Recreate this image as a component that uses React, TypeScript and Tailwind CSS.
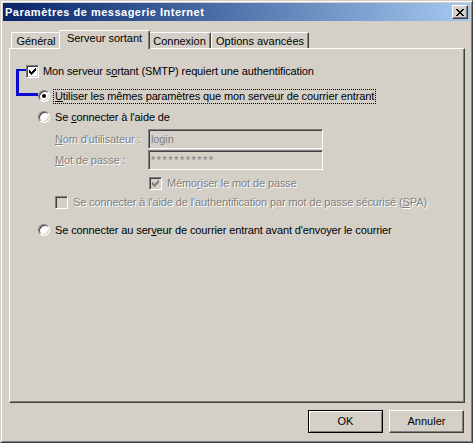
import type { ReactNode } from 'react';

const CHECK = 'M6 0h1v1h-1z M5 1h2v1h-2z M0 2h1v1h-1z M4 2h3v1h-3z M0 3h2v1h-2z M3 3h3v1h-3z M0 4h5v1h-5z M1 5h3v1h-3z M2 6h1v1h-1z';
const CROSS = 'M0 0h2v1h-2z M6 0h2v1h-2z M1 1h2v1h-2z M5 1h2v1h-2z M2 2h4v1h-4z M3 3h2v1h-2z M2 4h4v1h-4z M1 5h2v1h-2z M5 5h2v1h-2z M0 6h2v1h-2z M6 6h2v1h-2z';

const Check = ({ checked, disabled }: { checked?: boolean; disabled?: boolean }) => (
    <span
        className={`flex h-[13px] w-[13px] shrink-0 items-center justify-center border border-t-[#808080] border-l-[#808080] border-r-white border-b-white shadow-[inset_1px_1px_0_#404040,inset_-1px_-1px_0_#d4d0c8] ${disabled ? 'bg-[#d4d0c8]' : 'bg-white'}`}
    >
        {checked && (
            <svg width="7" height="7" viewBox="0 0 7 7" shapeRendering="crispEdges" className={disabled ? 'fill-[#808080]' : 'fill-black'}>
                <path d={CHECK} />
            </svg>
        )}
    </span>
);

const Radio = ({ checked }: { checked?: boolean }) => (
    <span className="flex h-[12px] w-[12px] shrink-0 items-center justify-center rounded-full border border-t-[#808080] border-l-[#808080] border-r-white border-b-white bg-white shadow-[inset_1px_1px_0_#404040,inset_-1px_-1px_0_#d4d0c8]">
        {checked && <span className="h-[4px] w-[4px] rounded-full bg-black" />}
    </span>
);

const Tab = ({ label, width, active }: { label: string; width: string; active?: boolean }) => (
    <div
        className={
            active
                ? `relative z-10 -mx-[2px] -mb-[1px] flex h-[19px] items-start justify-center rounded-t-[2px] border-t border-l border-r border-t-white border-l-white border-r-[#404040] bg-[#d4d0c8] pt-[1px] shadow-[inset_-1px_0_0_#808080] ${width}`
                : `flex h-[16px] items-center justify-center rounded-t-[2px] border-t border-l border-r border-t-white border-l-white border-r-[#404040] bg-[#d4d0c8] pt-[1px] shadow-[inset_-1px_0_0_#808080] ${width}`
        }
    >
        {label}
    </div>
);

const Disabled = ({ children }: { children: ReactNode }) => (
    <span className="text-[#808080] [text-shadow:1px_1px_0_#ffffff]">{children}</span>
);

const Field = ({ label, value, secret }: { label: ReactNode; value: string; secret?: boolean }) => (
    <div className="ml-[45px] flex h-[20px] items-center">
        <span className="w-[93px]">
            <Disabled>{label}</Disabled>
        </span>
        <div
            className={`flex h-[20px] w-[175px] items-center border border-t-[#808080] border-l-[#808080] border-r-white border-b-white bg-[#d4d0c8] pl-[2px] text-[#808080] shadow-[inset_1px_1px_0_#404040,inset_-1px_-1px_0_#d4d0c8] ${secret ? 'tracking-[1.5px]' : ''}`}
        >
            {value}
        </div>
    </div>
);

export default function App() {
    return (
        <div className="relative flex h-[443px] w-[473px] flex-col overflow-hidden border border-t-[#d4d0c8] border-l-[#d4d0c8] border-r-[#404040] border-b-[#404040] bg-[#d4d0c8] p-[2px] font-['Liberation_Sans',Arial,sans-serif] text-[11px] leading-[13px] text-black shadow-[inset_1px_1px_0_#ffffff,inset_-1px_-1px_0_#808080]">
            {/* barre de titre */}
            <div className="flex h-[18px] shrink-0 items-center justify-between bg-linear-to-r from-[#0a246a] to-[#a6caf0] pl-[2px] pr-[2px]">
                <span className="font-bold tracking-[0.5px] text-white">Paramètres de messagerie Internet</span>
                <div className="flex h-[14px] w-[16px] items-center justify-center border border-t-white border-l-white border-r-[#404040] border-b-[#404040] bg-[#d4d0c8] shadow-[inset_-1px_-1px_0_#808080]">
                    <svg width="8" height="7" viewBox="0 0 8 7" shapeRendering="crispEdges" className="fill-black">
                        <path d={CROSS} />
                    </svg>
                </div>
            </div>

            <div className="flex flex-1 flex-col pl-[6px] pr-[5px]">
                {/* onglets */}
                <div className="mt-[9px] flex h-[18px] items-end pl-[2px]">
                    <Tab label="Général" width="w-[50px]" />
                    <Tab label="Serveur sortant" width="w-[91px]" active />
                    <Tab label="Connexion" width="w-[63px]" />
                    <Tab label="Options avancées" width="w-[98px]" />
                </div>

                {/* panneau */}
                <div className="flex h-[355px] flex-col border border-t-white border-l-white border-r-[#404040] border-b-[#404040] tracking-[-0.12px] shadow-[inset_-1px_-1px_0_#808080]">
                    <div className="ml-[16px] mt-[16px] flex h-[13px] items-center gap-[4px]">
                        <Check checked />
                        <span>
                            Mon serveur s<u>o</u>rtant (SMTP) requiert une authentification
                        </span>
                    </div>

                    <div className="ml-[28px] mt-[11px] flex h-[14px] items-center">
                        <Radio checked />
                        <span className="ml-[3px] border border-dotted border-black px-[1px]">
                            <u>U</u>tiliser les mêmes paramètres que mon serveur de courrier entrant
                        </span>
                    </div>

                    <div className="ml-[28px] mt-[7px] flex h-[14px] items-center">
                        <Radio />
                        <span className="ml-[3px] border border-transparent px-[1px]">
                            Se <u>c</u>onnecter à l'aide de
                        </span>
                    </div>

                    <div className="mt-[5px] flex flex-col gap-[1px]">
                        <Field label={<><u>N</u>om d'utilisateur :</>} value="login" />
                        <Field label={<><u>M</u>ot de passe :</>} value="***********" secret />
                    </div>

                    <div className="ml-[139px] mt-[7px] flex h-[13px] items-center gap-[5px]">
                        <Check checked disabled />
                        <Disabled>
                            Mémo<u>r</u>iser le mot de passe
                        </Disabled>
                    </div>

                    <div className="ml-[45px] mt-[6px] flex h-[13px] items-center gap-[5px]">
                        <Check disabled />
                        <Disabled>
                            Se connecter à l'aide de l'authentification par mot de passe sécurisé (<u>S</u>PA)
                        </Disabled>
                    </div>

                    <div className="ml-[28px] mt-[14px] flex h-[14px] items-center">
                        <Radio />
                        <span className="ml-[3px] border border-transparent px-[1px]">
                            Se connecter au ser<u>v</u>eur de courrier entrant avant d'envoyer le courrier
                        </span>
                    </div>
                </div>

                {/* boutons */}
                <div className="mt-[7px] flex justify-end gap-[6px] pr-[1px]">
                    <button className="flex h-[23px] w-[75px] items-center justify-center border border-black bg-[#d4d0c8] shadow-[inset_1px_1px_0_#ffffff,inset_-1px_-1px_0_#808080]">
                        OK
                    </button>
                    <button className="flex h-[23px] w-[75px] items-center justify-center border border-t-white border-l-white border-r-[#404040] border-b-[#404040] bg-[#d4d0c8] shadow-[inset_-1px_-1px_0_#808080]">
                        Annuler
                    </button>
                </div>
            </div>

            {/* annotation bleue */}
            <div className="absolute left-[15px] top-[68px] h-[2px] w-[10px] bg-[#0a0ad0]" />
            <div className="absolute left-[15px] top-[68px] h-[27px] w-[3px] bg-[#0a0ad0]" />
            <div className="absolute left-[15px] top-[92px] h-[3px] w-[22px] bg-[#0a0ad0]" />
        </div>
    );
}
